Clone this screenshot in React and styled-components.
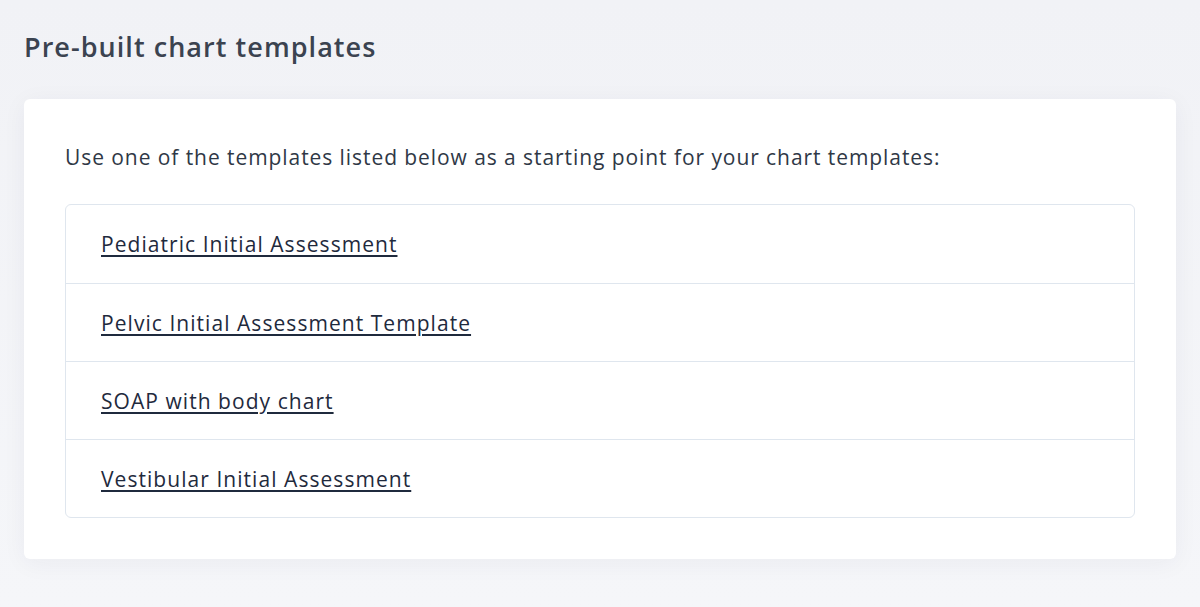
import styled, { createGlobalStyle } from "styled-components"

const GlobalStyle = createGlobalStyle`
  html, body {
    margin: 0;
    padding: 0;
    background: #f3f4f8;
  }
  body {
    font-family: "Open Sans", "Noto Sans", sans-serif;
  }
`

const Page = styled.div`
  min-height: 607px;
  box-sizing: border-box;
  padding: 26px 24px 48px;
  background: linear-gradient(180deg, #f1f2f6 0%, #f5f6f9 100%);
`

const Title = styled.h1`
  margin: 0 0 31px;
  font-size: 27px;
  font-weight: 600;
  letter-spacing: 1.05px;
  line-height: 42px;
  color: #3b4350;
`

const Card = styled.div`
  background: #fff;
  border-radius: 6px;
  padding: 41px;
  box-shadow: 0 4px 24px rgba(30, 40, 70, 0.05);
`

const Intro = styled.p`
  margin: 0 0 30px;
  font-size: 21px;
  letter-spacing: 0.93px;
  line-height: 34px;
  color: #2f3846;
`

const List = styled.ul`
  list-style: none;
  margin: 0;
  padding: 0;
  border: 1.5px solid #dfe6ee;
  border-radius: 6px;
`

const Row = styled.li`
  height: 78px;
  display: flex;
  align-items: center;
  padding: 0 35px;
  box-sizing: border-box;
  border-top: ${(p) => (p.$first ? "none" : "1.5px solid #dfe6ee")};
`

const Link = styled.a`
  font-size: 21px;
  letter-spacing: 1.05px;
  color: #1f2a3d;
  text-decoration: underline;
  text-underline-offset: 3px;
  text-decoration-thickness: 1.5px;
  cursor: pointer;
`

const templates = [
  "Pediatric Initial Assessment",
  "Pelvic Initial Assessment Template",
  "SOAP with body chart",
  "Vestibular Initial Assessment",
]

export default function App() {
  return (
    <>
      <GlobalStyle />
      <Page>
        <Title>Pre-built chart templates</Title>
        <Card>
          <Intro>Use one of the templates listed below as a starting point for your chart templates:</Intro>
          <List>
            {templates.map((t, i) => (
              <Row key={t} $first={i === 0}>
                <Link>{t}</Link>
              </Row>
            ))}
          </List>
        </Card>
      </Page>
    </>
  )
}
